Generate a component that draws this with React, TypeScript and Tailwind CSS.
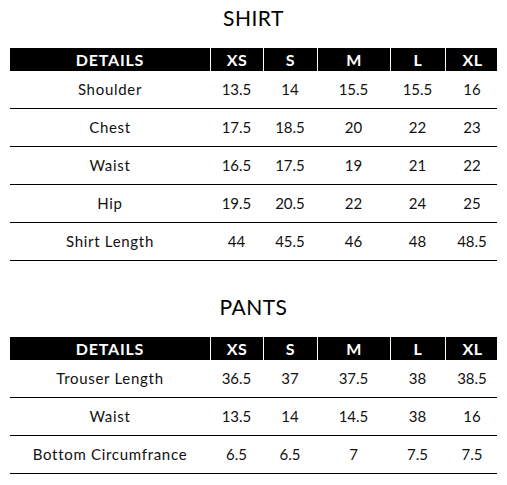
import React from "react";

const cols = "grid grid-cols-[200px_53px_54px_73px_55px_54px]";
const sizes = ["XS", "S", "M", "L", "XL"];

function SizeTable({ title, rows }: { title: string; rows: [string, ...string[]][] }) {
  return (
    <div>
      <div className="h-[36px] flex items-center justify-center text-[21px] text-black tracking-[0.5px]">{title}</div>
      <div className="mt-[12px]">
        <div className={`${cols} h-[23px] bg-black text-white font-bold text-[16px]`}>
          <div className="flex items-center justify-center tracking-[0.8px]">DETAILS</div>
          {sizes.map((s) => (
            <div key={s} className="flex items-center justify-center border-l border-white tracking-[0.5px]">{s}</div>
          ))}
        </div>
        {rows.map((r) => (
          <div key={r[0]} className={`${cols} h-[38px] border-b border-black text-[15px] text-[#111]`}>
            {r.map((c, i) => (
              <div key={i} className={`flex items-center justify-center ${i === 0 ? "tracking-[0.7px]" : ""}`}>{c}</div>
            ))}
          </div>
        ))}
      </div>
    </div>
  );
}

export default function App() {
  return (
    <div className="w-[507px] h-[485px] bg-white px-[10px] font-['Lato',sans-serif]">
      <SizeTable
        title="SHIRT"
        rows={[
          ["Shoulder", "13.5", "14", "15.5", "15.5", "16"],
          ["Chest", "17.5", "18.5", "20", "22", "23"],
          ["Waist", "16.5", "17.5", "19", "21", "22"],
          ["Hip", "19.5", "20.5", "22", "24", "25"],
          ["Shirt Length", "44", "45.5", "46", "48", "48.5"],
        ]}
      />
      <div className="h-[28px]" />
      <SizeTable
        title="PANTS"
        rows={[
          ["Trouser Length", "36.5", "37", "37.5", "38", "38.5"],
          ["Waist", "13.5", "14", "14.5", "38", "16"],
          ["Bottom Circumfrance", "6.5", "6.5", "7", "7.5", "7.5"],
        ]}
      />
    </div>
  );
}
